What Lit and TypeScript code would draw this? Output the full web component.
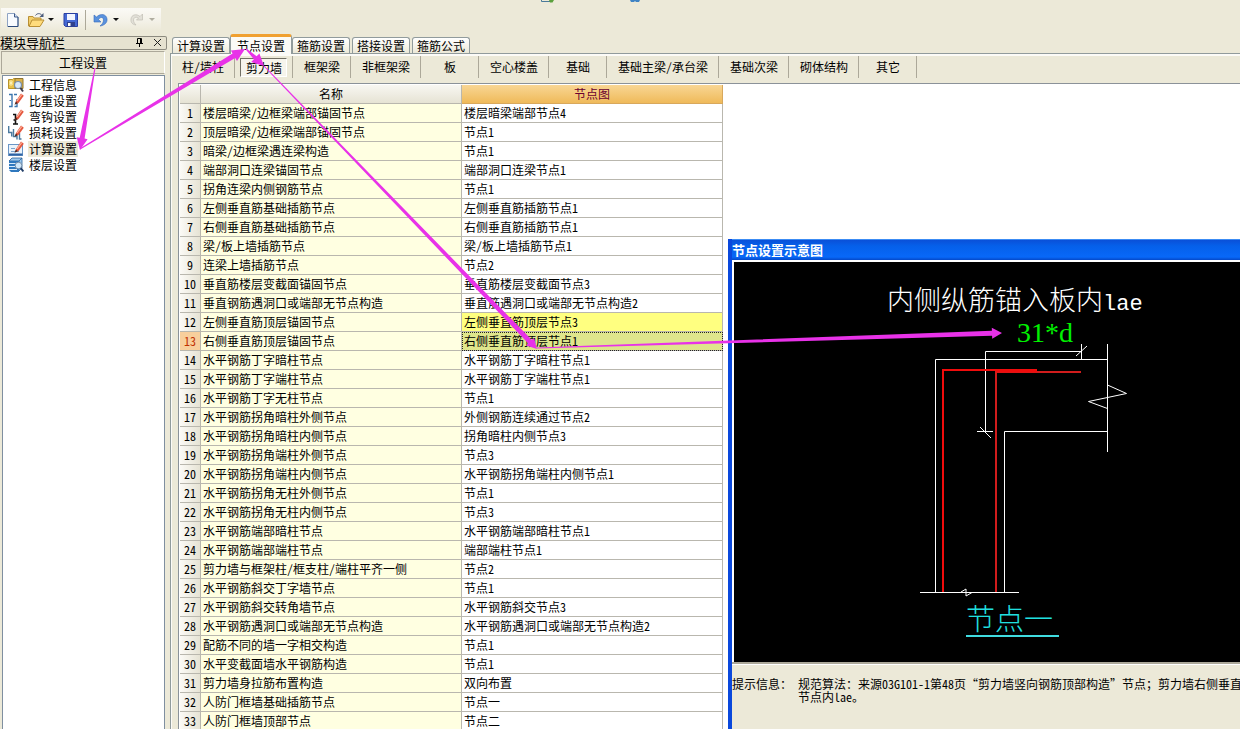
import { LitElement, html, css, svg } from "lit";
import { customElement, property, state } from "lit/decorators.js";
import { classMap } from "lit/directives/class-map.js";

const TABS = ["计算设置", "节点设置", "箍筋设置", "搭接设置", "箍筋公式"];

const PARTS = [
  "柱/墙柱", "剪力墙", "框架梁", "非框架梁", "板", "空心楼盖",
  "基础", "基础主梁/承台梁", "基础次梁", "砌体结构", "其它",
];

const NAV = ["工程信息", "比重设置", "弯钩设置", "损耗设置", "计算设置", "楼层设置"];

const ROWS: [string, string][] = [
  ["楼层暗梁/边框梁端部锚固节点", "楼层暗梁端部节点4"],
  ["顶层暗梁/边框梁端部锚固节点", "节点1"],
  ["暗梁/边框梁遇连梁构造", "节点1"],
  ["端部洞口连梁锚固节点", "端部洞口连梁节点1"],
  ["拐角连梁内侧钢筋节点", "节点1"],
  ["左侧垂直筋基础插筋节点", "左侧垂直筋插筋节点1"],
  ["右侧垂直筋基础插筋节点", "右侧垂直筋插筋节点1"],
  ["梁/板上墙插筋节点", "梁/板上墙插筋节点1"],
  ["连梁上墙插筋节点", "节点2"],
  ["垂直筋楼层变截面锚固节点", "垂直筋楼层变截面节点3"],
  ["垂直钢筋遇洞口或端部无节点构造", "垂直筋遇洞口或端部无节点构造2"],
  ["左侧垂直筋顶层锚固节点", "左侧垂直筋顶层节点3"],
  ["右侧垂直筋顶层锚固节点", "右侧垂直筋顶层节点1"],
  ["水平钢筋丁字暗柱节点", "水平钢筋丁字暗柱节点1"],
  ["水平钢筋丁字端柱节点", "水平钢筋丁字端柱节点1"],
  ["水平钢筋丁字无柱节点", "节点1"],
  ["水平钢筋拐角暗柱外侧节点", "外侧钢筋连续通过节点2"],
  ["水平钢筋拐角暗柱内侧节点", "拐角暗柱内侧节点3"],
  ["水平钢筋拐角端柱外侧节点", "节点3"],
  ["水平钢筋拐角端柱内侧节点", "水平钢筋拐角端柱内侧节点1"],
  ["水平钢筋拐角无柱外侧节点", "节点1"],
  ["水平钢筋拐角无柱内侧节点", "节点3"],
  ["水平钢筋端部暗柱节点", "水平钢筋端部暗柱节点1"],
  ["水平钢筋端部端柱节点", "端部端柱节点1"],
  ["剪力墙与框架柱/框支柱/端柱平齐一侧", "节点2"],
  ["水平钢筋斜交丁字墙节点", "节点1"],
  ["水平钢筋斜交转角墙节点", "水平钢筋斜交节点3"],
  ["水平钢筋遇洞口或端部无节点构造", "水平钢筋遇洞口或端部无节点构造2"],
  ["配筋不同的墙一字相交构造", "节点1"],
  ["水平变截面墙水平钢筋构造", "节点1"],
  ["剪力墙身拉筋布置构造", "双向布置"],
  ["人防门框墙基础插筋节点", "节点一"],
  ["人防门框墙顶部节点", "节点二"],
];

const reset = css`
  * { box-sizing: border-box; }
  button {
    margin: 0;
    padding: 0;
    border: 0;
    background: none;
    color: inherit;
    font: inherit;
    white-space: nowrap;
  }
  svg { display: block; flex: none; }
`;

const pencil = svg`
  <path d="M8 8 13 .5 15.800 2.800 10.500 10 7.500 11.200Z" fill="#e4573f"/>
  <path d="M9 8 13.800 1.500" stroke="#ffb49c" stroke-width="1.200"/>
  <path d="M6.500 11.800 7.800 8.600 9.800 10.200Z" fill="#4a2a20"/>`;

const NAV_ICONS = [
  svg`<path d="M.5 2.500h4l1-1h3v10h-8z" fill="#e9c24a" stroke="#b8942c"/>
      <path d="M3 3v6M1 6h4M1.500 4l3 4M4.500 4l-3 4" stroke="#fff6c0" stroke-width=".8"/>
      <path d="M7 1.500h8v10H7z" fill="#d9b24c" stroke="#8f7430"/>
      <circle cx="10" cy="8" r="3.500" fill="#d8eafa" stroke="#7a8fa8" stroke-width="1.200"/>
      <path d="m12.500 11 2.500 3.500" stroke="#3b3b4a" stroke-width="2"/>`,
  svg`<path d="M1 1.500h3v12H1M6 1.500h3M9 6v7.500H6.500" fill="none" stroke="#3b76ae" stroke-width="1.400"/>
      <path d="M3 7.500H1.500" stroke="#3b76ae"/>${pencil}`,
  svg`<path d="M5 5.500h2.500v9.500M5 15h5M5.500 11h2" fill="none" stroke="#111" stroke-width="1.600"/>${pencil}`,
  svg`<path d="M.7 1v6.500h3v4M5.500 4v7.500h3.500v3M11.500 8v6h2" fill="none" stroke="#4b7a9e" stroke-width="1.400"/>${pencil}`,
  svg`<rect x=".5" y="3.500" width="14" height="11" fill="#eaf3fb" stroke="#6a96c6"/>
      <path d="M1 13.500h13.500" stroke="#2d62a4" stroke-width="2"/>
      <path d="M3 7.500h4M3 10.500h8" stroke="#7aa2cc"/>${pencil}`,
  svg`<path d="M4 1h10l-3 3H1zM14 1v10l-3 3V4" fill="#9cc8ee" stroke="#2b6299" stroke-width=".8"/>
      <path d="M1 4h10v11H3L1 13z" fill="#2f78be"/>
      <path d="M1 6.500h7M1 9.500h6M1 12.500h8" stroke="#d9ecfb"/>
      <circle cx="10.500" cy="8.500" r="3.300" fill="#d0e8fa" stroke="#7a8fa8"/>
      <path d="m12.800 11 2.500 3.500" stroke="#1f3c66" stroke-width="2"/>`,
];

/* Tapered pointer: a hairline at the start, a solid head at the end. */
function arrow(x1: number, y1: number, x2: number, y2: number, w: number, head: number, spread: number) {
  const len = Math.hypot(x2 - x1, y2 - y1);
  const ux = (x2 - x1) / len;
  const uy = (y2 - y1) / len;
  const bx = x2 - ux * head;
  const by = y2 - uy * head;
  const at = (x: number, y: number, d: number) => `${(x - uy * d).toFixed(1)},${(y + ux * d).toFixed(1)}`;
  const points = [
    at(x1, y1, 0.5), at(bx, by, w / 2), at(bx, by, spread / 2), at(x2, y2, 0),
    at(bx, by, -spread / 2), at(bx, by, -w / 2), at(x1, y1, -0.5),
  ].join(" ");
  return svg`<polygon points=${points} />`;
}

@customElement("tool-strip")
class ToolStrip extends LitElement {
  static styles = [reset, css`
    :host { display: flex; padding: 8px 0 0 1px; height: 36px; }
    .strip {
      display: flex;
      align-items: center;
      width: 160px;
      height: 23px;
      padding-left: 4px;
      background: linear-gradient(#fbfaf6, #f3f1e7 60%, #ece9d8);
    }
    .sep { width: 1px; height: 20px; margin: 0 6px; background: #aca899; }
    .caret { width: 12px; display: flex; justify-content: center; }
    .gap { margin-left: 6px; }
    .edge { margin-top: -8px; }
    .remnants { flex: 1; padding-left: 380px; }
  `];
  render() {
    const caret = (fill: string) => html`<button class="caret" aria-label="更多">
      <svg width="6" height="3"><path d="M0 0h6L3 3z" fill=${fill} /></svg></button>`;
    return html`
      <div class="strip">
        <button aria-label="新建"><svg width="16" height="16" viewBox="0 0 16 16">
          <path d="M2.500 1.500h7l3.500 3.500v9.500H2.500z" fill="#f8fbff" stroke="#8fa4c4"/>
          <path d="M9.500 1.500v3.500H13" fill="#cfdcf0" stroke="#3f5a88"/>
          <path d="M13 5v9.500H3" fill="none" stroke="#2b4a7c"/></svg></button>
        <button class="gap" aria-label="打开"><svg width="18" height="16" viewBox="0 0 18 16">
          <path d="M1.500 14V4.500h4.500l1 1.500h7v3" fill="#f3cf6b" stroke="#b98f34"/>
          <path d="M2 14.500 5 8h12l-4 6.500z" fill="#ffdc7c" stroke="#b98f34"/>
          <path d="M8.500 3.500c1.500-2.500 5-2.500 6.500 0" fill="none" stroke="#4a5a7a"/>
          <path d="M16.500 1v4h-4z" fill="#4a5a7a"/></svg></button>
        ${caret("#111")}
        <button class="gap" aria-label="保存"><svg width="16" height="16" viewBox="0 0 16 16">
          <path d="M1 1.500h13.500v13H2.500L1 13z" fill="#4468d4" stroke="#2a3fa0"/>
          <rect x="4" y="2" width="8" height="6" fill="#f2f5ff"/>
          <rect x="4" y="10" width="8" height="4.500" fill="#30408c"/>
          <rect x="5" y="11" width="2.500" height="3" fill="#fff"/></svg></button>
        <span class="sep"></span>
        <button class="undo" aria-label="撤销"><svg width="18" height="16" viewBox="0 0 18 16">
          <path d="M2 3v7h7L6.500 7.500C8.500 4.500 11.500 5 11.500 8c0 2.500-1.500 4.500-3.500 6 4-.5 7.500-3 7-7C14.500 2 8.500 1 4.500 5z" fill="#5a92de" stroke="#3468b8" stroke-width=".6"/></svg></button>
        ${caret("#111")}
        <button class="gap" aria-label="恢复"><svg width="18" height="16" viewBox="0 0 18 16">
          <path d="M14.500 2v6h-6L10.500 6C8 4.500 5.500 5.500 5.500 8c0 2 1 3.500 2.500 5-3.500-.5-5.500-2.500-5-6C3.500 2.500 8.500 1.500 12 4.500z" fill="#e2e0d8" stroke="#c2bfb4" stroke-width=".7"/></svg></button>
        ${caret("#b0ada0")}
      </div>
      <div class="remnants">
        <svg class="edge" width="100" height="3" viewBox="0 0 100 3">
          <path d="M.5 0v1.500H10" fill="none" stroke="#4a7a9a"/>
          <path d="M8 0h5l-1.500 2.500H9z" fill="#5aa03c"/>
          <path d="M89 0h10l-1 2h-3l-1-1-1 1h-3z" fill="#3f83c4"/>
        </svg>
      </div>`;
  }
}

@customElement("module-nav")
class ModuleNav extends LitElement {
  @property({ type: Number }) selected = 4;
  static styles = [reset, css`
    :host { display: flex; flex-direction: column; width: 167px; flex: none; }
    .title {
      display: flex;
      align-items: center;
      height: 14px;
      border: 1px solid #8d8b80;
      border-left: 0;
      border-radius: 2px;
      padding-right: 2px;
      font-size: 13px;
      line-height: 12px;
      background: #e6e2d0;
    }
    .name { flex: 1; }
    .icon { width: 12px; height: 12px; margin-left: 6px; }
    .group {
      height: 23px;
      margin: 1px 2px 0 1px;
      border: 1px solid;
      border-color: #aca899 #fff #aca899 #aca899;
      background: #ece9d8;
      line-height: 21px;
      text-align: center;
    }
    .list {
      flex: 1;
      margin: 1px 2px 0 2px;
      padding: 1px 0 0 5px;
      border: 1px solid #7f8fa0;
      border-bottom: 0;
      background: #fff;
    }
    .item { display: flex; align-items: center; height: 16px; gap: 4px; line-height: 16px; }
    .label { padding: 0 1px; }
    .on .label { background: #ece9d8; }
  `];
  render() {
    return html`
      <header class="title">
        <span class="name">模块导航栏</span>
        <button class="icon" aria-label="固定"><svg width="12" height="12" viewBox="0 0 12 12">
          <path d="M3.500 6.500v-5h4v5M2 6.500h7M5.500 6.500V10M6.500 1.500v5" fill="none" stroke="#000"/></svg></button>
        <button class="icon" aria-label="关闭"><svg width="12" height="12" viewBox="0 0 12 12">
          <path d="m2 2 7 7M9 2 2 9" stroke="#222"/></svg></button>
      </header>
      <button class="group">工程设置</button>
      <nav class="list">
        ${NAV.map((label, i) => html`
          <button class=${classMap({ item: true, on: i === this.selected })} @click=${() => (this.selected = i)}>
            <svg width="16" height="16" viewBox="0 0 16 16">${NAV_ICONS[i]}</svg>
            <span class="label">${label}</span>
          </button>`)}
      </nav>`;
  }
}

@customElement("node-grid")
class NodeGrid extends LitElement {
  @property({ type: Number }) current = 12;
  static styles = [reset, css`
    :host { display: block; }
    .table { table-layout: fixed; border-collapse: separate; border-spacing: 0; width: 543px; }
    .c-num { width: 21px; }
    th, td {
      height: 19px;
      padding: 0 2px;
      border: solid #b9b7ae;
      border-width: 0 1px 1px 0;
      font-weight: normal;
      line-height: 18px;
      white-space: nowrap;
      text-align: left;
    }
    thead th { text-align: center; background: linear-gradient(#f8f7f2, #e6e3d4); }
    thead .node { background: linear-gradient(#f8d694, #efba5a); color: #6a0030; border-color: #d8a85c; }
    .num { text-align: center; padding: 0; background: linear-gradient(90deg, #fbfaf6, #e6e3d4); }
    .name { background: #ffffe1; }
    .value { background: #fff; }
    .changed .value { background: #ffff80; }
    .current .value { background: #dfe68c; outline: 1px dotted #222; outline-offset: -1px; }
    .current .num { background: #f8cf9c; color: #c03000; }
  `];
  render() {
    return html`
      <table class="table">
        <colgroup><col class="c-num" /><col /><col /></colgroup>
        <thead><tr><th></th><th scope="col">名称</th><th class="node" scope="col">节点图</th></tr></thead>
        <tbody>
          ${ROWS.map(([name, value], i) => html`
            <tr class=${classMap({ changed: i === 11, current: i === this.current })} @click=${() => (this.current = i)}>
              <th class="num" scope="row">${i + 1}</th><td class="name">${name}</td><td class="value">${value}</td>
            </tr>`)}
        </tbody>
      </table>`;
  }
}

@customElement("node-preview")
class NodePreview extends LitElement {
  static styles = [reset, css`
    :host {
      display: flex;
      flex-direction: column;
      border-left: 4px solid #0a48dc;
      background: #ece9d8;
      overflow: hidden;
    }
    .title {
      margin: 0;
      height: 21px;
      border-top: 1px solid #3c8cf4;
      background: linear-gradient(#0a50d8, #0560ea 30%, #0868f8 85%, #0448c8);
      color: #fff;
      font-size: 13px;
      font-weight: bold;
      line-height: 20px;
    }
    .canvas {
      border: solid #fff;
      border-width: 2px 0 0 2px;
      background: #000;
      overflow: hidden;
    }
    .rule { height: 3px; border-top: 2px solid #aca899; background: #fff; }
    .hint { display: flex; gap: 6px; margin: 0; padding-top: 12px; line-height: 13px; white-space: nowrap; }
    .hint dd { margin: 0; }
    .big { font-family: "Noto Sans CJK SC", sans-serif; font-weight: 300; font-size: 27px; fill: #fff; }
    .latin { font-family: "Liberation Mono", monospace; font-size: 22px; font-weight: 400; }
    .dim { font-family: "Liberation Serif", serif; font-size: 28px; fill: #00f000; }
    .caption { font-family: "Noto Sans CJK SC", sans-serif; font-weight: 300; font-size: 29px; fill: #20e0e0; }
  `];
  render() {
    return html`
      <h2 class="title">节点设置示意图</h2>
      <div class="canvas">
        <svg width="506" height="400" viewBox="734 262 506 400">
          <text class="big" x="887" y="310">内侧纵筋锚入板内<tspan class="latin">lae</tspan></text>
          <text class="dim" x="1017" y="342">31*d</text>
          <g fill="none" stroke="#fff">
            <path d="M935.5 592V359.500H1107M1004.500 592V431.500H1107M1107.500 344V452"/>
            <path d="M985.500 431V351.500H1081.500M1081.500 344V359M1076 356l11-10M977 431.500h16M980 427l11 11"/>
            <path d="M1107.500 385l19 8.500-38 8 19 7"/>
            <path d="M920 592.500H1019M961 592l5-3v7l6-3.500"/>
          </g>
          <g fill="none" stroke="#f00c0c" stroke-width="2">
            <path d="M943 592V370H1037"/>
            <path d="M996 592V372H1081" stroke="#d01c1c"/>
            <path d="M996 371H1037" stroke-width="3"/>
          </g>
          <text class="caption" x="966" y="630">节点一</text>
          <path d="M966 636H1059" stroke="#40dce0" stroke-width="2"/>
        </svg>
      </div>
      <div class="rule"></div>
      <dl class="hint">
        <dt>提示信息：</dt>
        <dd>规范算法：来源03G101-1第48页“剪力墙竖向钢筋顶部构造”节点；剪力墙右侧垂直<br />节点内lae。</dd>
      </dl>`;
  }
}

@customElement("app-root")
class AppRoot extends LitElement {
  @state() private tab = 1;
  @state() private part = 1;
  static styles = [reset, css`
    :host {
      display: flex;
      flex-direction: column;
      position: relative;
      height: 100vh;
      overflow: hidden;
      background: #ece9d8;
      color: #000;
      font-family: "Noto Sans Mono CJK SC", "Noto Sans CJK SC", sans-serif;
      font-size: 12px;
    }
    .main { display: flex; flex: 1; min-height: 0; }
    .work { display: flex; flex-direction: column; flex: 1; min-width: 0; margin-left: 3px; }
    .tabs { display: flex; align-items: flex-end; gap: 2px; height: 17px; padding-left: 2px; }
    .tab {
      width: 58px;
      height: 16px;
      border: 1px solid #919b9c;
      border-bottom: 0;
      border-radius: 3px 3px 0 0;
      background: linear-gradient(#fff, #ece9d8);
      line-height: 16px;
    }
    .tab.on {
      width: 62px;
      height: 20px;
      margin: 0 -2px -1px;
      border-top: 3px solid #f0a030;
      background: #fbfaf6;
      line-height: 14px;
      z-index: 1;
    }
    .panel {
      display: flex;
      flex-direction: column;
      flex: 1;
      min-height: 0;
      border: solid #919b9c;
      border-width: 1px 0 0 1px;
      box-shadow: inset 1px 2px #fcfbf7;
    }
    .parts { display: flex; height: 29px; padding-top: 2px; }
    .part {
      min-width: 58px;
      height: 22px;
      padding: 0 10px 0 11px;
      border-right: 1px solid #aca899;
      line-height: 22px;
    }
    .part.on { padding: 0 5px; }
    .part.on .face {
      display: block;
      height: 19px;
      border: 1px solid;
      border-color: #716f64 #fff #fff #716f64;
      background: #f6f4ec;
      line-height: 18px;
      padding-left: 1px;
    }
    .sheet {
      flex: 1;
      min-height: 0;
      margin-left: 7px;
      padding: 1px 0 0 1px;
      border: solid #8b9299;
      border-width: 1px 0 0 1px;
      background: #fff;
      overflow: hidden;
    }
    .preview { position: absolute; left: 728px; top: 239px; right: 0; bottom: 0; }
    .marks { position: absolute; left: 0; top: 0; z-index: 2; pointer-events: none; fill: #e832e8; }
  `];
  render() {
    return html`
      <tool-strip></tool-strip>
      <div class="main">
        <module-nav></module-nav>
        <main class="work">
          <div class="tabs" role="tablist">
            ${TABS.map((t, i) => html`<button role="tab" aria-selected=${i === this.tab}
              class=${classMap({ tab: true, on: i === this.tab })} @click=${() => (this.tab = i)}>${t}</button>`)}
          </div>
          <div class="panel">
            <div class="parts">
              ${PARTS.map((p, i) => html`<button class=${classMap({ part: true, on: i === this.part })}
                @click=${() => (this.part = i)}><span class="face">${p}</span></button>`)}
            </div>
            <div class="sheet"><node-grid></node-grid></div>
          </div>
        </main>
      </div>
      <node-preview class="preview"></node-preview>
      <svg class="marks" width="1240" height="729" aria-hidden="true">
        ${arrow(95, 68, 80, 150, 5, 12, 11)}
        ${arrow(80, 149, 245, 49, 5, 13, 12)}
        ${arrow(246, 49, 264, 66, 4, 12, 12)}
        ${arrow(264, 66, 537, 349, 5, 10, 11)}
        ${arrow(537, 348, 1002, 333, 5, 10, 11)}
      </svg>`;
  }
}
